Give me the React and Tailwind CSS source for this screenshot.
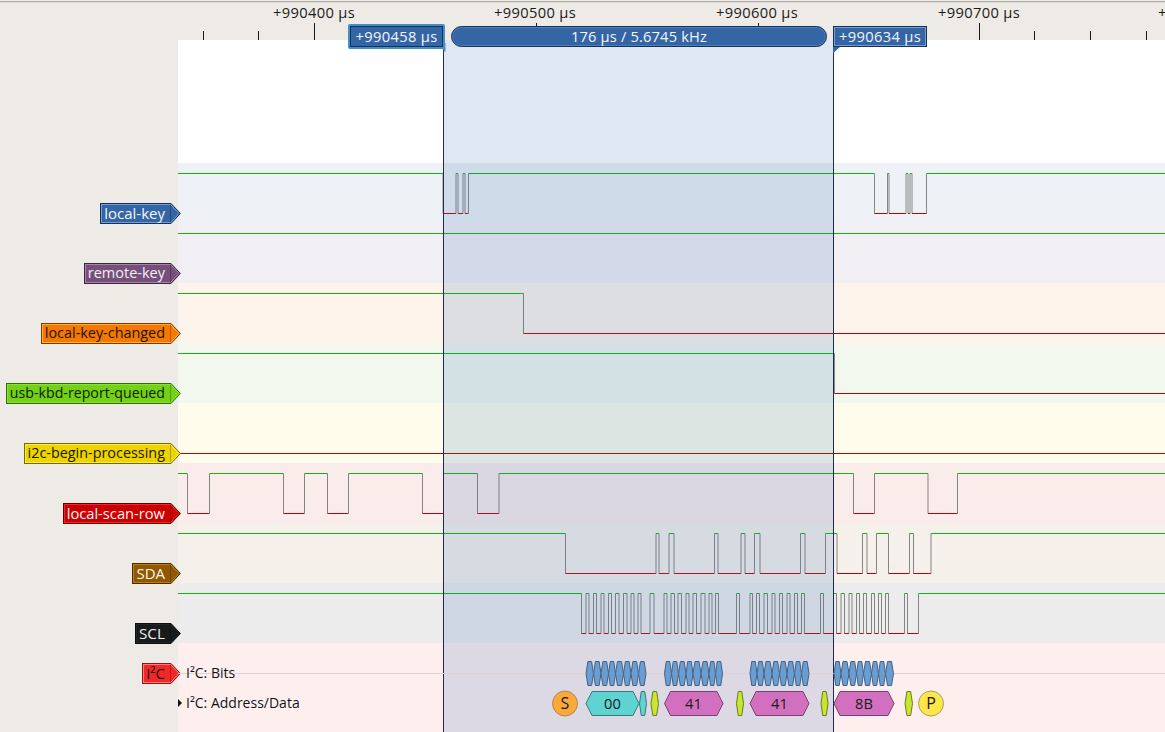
const FONT = "font-['Open_Sans',sans-serif]";
const MICRO = "µ";

function Wave({ edges = [], startHigh = true }) {
  const H = 10.5, L = 50.5;
  const pts = [178, ...edges, 1165];
  const lines = [];
  let high = startHigh;
  for (let i = 0; i < pts.length - 1; i++) {
    const y = high ? H : L;
    lines.push(<line key={"s" + i} x1={pts[i]} x2={pts[i + 1]} y1={y} y2={y} stroke={high ? "#0cb80c" : "#c00000"} />);
    if (i < edges.length) {
      lines.push(<line key={"e" + i} x1={edges[i]} x2={edges[i]} y1={H} y2={L} stroke="#848484" />);
    }
    high = !high;
  }
  return (
    <svg width="987" height="60" viewBox="178 0 987 60" className="block">
      {lines}
    </svg>
  );
}

function Arrow({ dark, light, fill }) {
  return (
    <svg width="11" height="21" viewBox="0 0 11 21" className="block shrink-0">
      <path d="M0 .5H1L10.4 10.5 1 20.5H0Z" fill={fill} stroke={dark} />
      <path d="M0 1.5H.6L9 10.5 .6 19.5H0" fill="none" stroke={light} />
    </svg>
  );
}

const signals = [
  { name: "local-key", size: "text-[15px]", band: "bg-[#eef1f6]", box: "bg-[#3465a4] border-[#17305a] shadow-[inset_1px_1px_0_#729fcf,inset_0_-1px_0_#729fcf] text-[#f4f6fa]", fill: "#3465a4", dark: "#17305a", light: "#729fcf",
    edges: [443, 456, 458, 463, 465, 468.5, 874.5, 887.5, 889, 906, 908, 910, 912, 926.5] },
  { name: "remote-key", size: "text-[14.5px]", band: "bg-[#f2eff4]", box: "bg-[#75507b] border-[#3a283d] shadow-[inset_1px_1px_0_#ad7fa8,inset_0_-1px_0_#ad7fa8] text-[#f4eef5]", fill: "#75507b", dark: "#3a283d", light: "#ad7fa8", edges: [] },
  { name: "local-key-changed", size: "text-[14.4px]", band: "bg-[#fef4ec]", box: "bg-[#f57900] border-[#7a3c00] shadow-[inset_1px_1px_0_#fcaf3e,inset_0_-1px_0_#fcaf3e] text-[#1a1200]", fill: "#f57900", dark: "#7a3c00", light: "#fcaf3e", edges: [523.5] },
  { name: "usb-kbd-report-queued", size: "text-[14.2px]", band: "bg-[#f3f8ee]", box: "bg-[#73d216] border-[#39690b] shadow-[inset_1px_1px_0_#8ae234,inset_0_-1px_0_#8ae234] text-[#0e1a02]", fill: "#73d216", dark: "#39690b", light: "#8ae234", edges: [834.5] },
  { name: "i2c-begin-processing", size: "text-[14.4px]", band: "bg-[#fefdec]", box: "bg-[#edd400] border-[#766a00] shadow-[inset_1px_1px_0_#fce94f,inset_0_-1px_0_#fce94f] text-[#1a1700]", fill: "#edd400", dark: "#766a00", light: "#fce94f", edges: [], startHigh: false },
  { name: "local-scan-row", size: "text-[14.7px]", band: "bg-[#fbecec]", box: "bg-[#cc0000] border-[#660000] shadow-[inset_1px_1px_0_#ef2929,inset_0_-1px_0_#ef2929] text-[#fff4f4]", fill: "#cc0000", dark: "#660000", light: "#ef2929",
    edges: [187.5, 209.5, 283.5, 304.5, 327.5, 348.5, 422.5, 443.5, 477.5, 499, 853.5, 874.5, 928, 957.5] },
  { name: "SDA", size: "text-[15px]", band: "bg-[#f5f1ea]", box: "bg-[#8f5902] border-[#472c01] shadow-[inset_1px_1px_0_#c17d11,inset_0_-1px_0_#c17d11] text-[#fdf6ea]", fill: "#8f5902", dark: "#472c01", light: "#c17d11",
    edges: [565.5, 656, 659, 669, 674, 714.5, 718, 741, 745, 754.5, 760, 800.5, 805, 825.5, 837, 862.5, 867, 876.5, 888.5, 909.5, 913.5, 931] },
  { name: "SCL", size: "text-[15.3px]", band: "bg-[#ececec]", box: "bg-[#181b1c] border-[#0c0e0e] shadow-[inset_1px_1px_0_#222526,inset_0_-1px_0_#222526] text-[#eeeeee]", fill: "#181b1c", dark: "#0c0e0e", light: "#222526",
    edges: [581.5, 586, 589, 593.5, 596.5, 601, 604, 608.5, 611.5, 615.5, 619, 623.5, 627, 631, 634, 638, 641, 650, 654, 664, 667, 671, 674.5, 678, 681.5, 686, 689, 693, 696.5, 701, 705, 709, 712, 715.5, 718.5, 736.5, 739.5, 750, 752.5, 756.5, 759.5, 764, 767.5, 772, 775, 779.5, 782.5, 787, 790, 794.5, 797.5, 801.5, 804.5, 820.5, 823.5, 833.5, 836.5, 841, 844.5, 849, 852, 856.5, 859.5, 863.5, 866.5, 871.5, 874.5, 878.5, 881.5, 885.5, 888.5, 904.5, 907.5, 918.5] },
];

function Label({ s, name }) {
  return (
    <div className="relative z-[5] flex h-[21px] -mr-[3px]">
      <div className={"flex items-center border-y border-l pl-[3px] pr-[5px] leading-none " + s.size + " " + s.box}>{name}</div>
      <Arrow dark={s.dark} light={s.light} fill={s.fill} />
    </div>
  );
}

function Row({ s }) {
  return (
    <div className="flex h-[60px]">
      <div className="flex w-[178px] justify-end pt-[40px]">
        <Label s={s} name={s.name} />
      </div>
      <div className={"flex-1 overflow-hidden " + s.band}>
        <Wave edges={s.edges} startHigh={s.startHigh !== false} />
      </div>
    </div>
  );
}

function hex(x0, x1, top, bottom) {
  const h = bottom - top;
  const d = Math.min(h / 4, (x1 - x0) / 4);
  const m = (top + bottom) / 2;
  return `M${x0} ${m}L${x0 + d} ${top}H${x1 - d}L${x1} ${m}L${x1 - d} ${bottom}H${x0 + d}Z`;
}

const bitGroups = [
  [586, 593.5, 601, 608.5, 615.5, 623.5, 631, 638.5, 646],
  [664.5, 671.5, 678.5, 686, 693, 701, 709, 715.5, 722.5],
  [750, 757, 764, 772, 779.5, 787, 794.5, 801.5, 809],
  [834, 841, 849, 856.5, 863.5, 871.5, 878.5, 885.5, 893.5],
];

function Decoder() {
  const T = 18.5, B = 42.5;
  const A1 = 48.5, A2 = 72.5, AM = 60.5;
  const pieces = [];
  bitGroups.forEach((g, gi) => {
    for (let i = 0; i < g.length - 1; i++) {
      pieces.push(<path key={`b${gi}-${i}`} d={hex(g[i], g[i + 1], T, B)} fill="#6c9dd0" stroke="#3f6289" />);
    }
  });
  const big = [
    [586, 639, "00", "#5fd2d2", "#39797c", 612.5],
    [664.5, 723, "41", "#d270bf", "#7a4272", 693.5],
    [750, 809, "41", "#d270bf", "#7a4272", 779.5],
    [834, 894, "8B", "#d270bf", "#7a4272", 864],
  ];
  const small = [
    [639.5, 646.5, "#5fd2d2", "#39797c"],
    [651, 658.5, "#c9e62e", "#6d7a24"],
    [736.5, 743.5, "#c9e62e", "#6d7a24"],
    [821, 828, "#c9e62e", "#6d7a24"],
    [905, 912.5, "#c9e62e", "#6d7a24"],
  ];
  const ff = "'Open Sans',sans-serif";
  return (
    <svg width="987" height="89" viewBox="178 0 987 89" className="block">
      <line x1="178" x2="1165" y1="30.5" y2="30.5" stroke="#e0d2d4" />
      {pieces}
      {small.map(([a, b, f, st], i) => <path key={"sm" + i} d={hex(a, b, A1, A2)} fill={f} stroke={st} />)}
      {big.map(([a, b, t, f, st, cx], i) => (
        <g key={"bg" + i}>
          <path d={hex(a, b, A1, A2)} fill={f} stroke={st} />
          <text x={cx} y={AM + 5} textAnchor="middle" fontSize="14.7" fill="#1a1a1a" fontFamily={ff}>{t}</text>
        </g>
      ))}
      <circle cx="565" cy={AM} r="12.5" fill="#fba83a" stroke="#a98a60" />
      <text x="565" y={AM + 5.5} textAnchor="middle" fontSize="16" fill="#1a1a1a" fontFamily={ff}>S</text>
      <circle cx="931" cy={AM} r="12.5" fill="#fce64a" stroke="#a9a060" />
      <text x="931" y={AM + 5.5} textAnchor="middle" fontSize="16" fill="#1a1a1a" fontFamily={ff}>P</text>
    </svg>
  );
}

const tickX = [203.5, 258.5, 369.5, 425.5, 480.5, 591.5, 647.5, 702.5, 813.5, 869.5, 925.5, 1034.5, 1090.5, 1146.5];
const majorX = [314.5, 536.5, 758.5, 979.5];

function Ruler() {
  return (
    <div className="relative h-[38px] overflow-hidden">
      <svg width="1165" height="38" viewBox="0 2 1165 38" className="absolute left-0 top-0">
        {tickX.map((x) => <line key={x} x1={x} x2={x} y1="31" y2="40" stroke="#1a1a1a" />)}
        {majorX.map((x) => <line key={x} x1={x} x2={x} y1="23" y2="40" stroke="#1a1a1a" />)}
      </svg>
      {[["+990400", 314], ["+990500", 535], ["+990600", 757], ["+990700", 979], ["+990800", 1199]].map(([t, x]) => (
        <span key={t} className="absolute top-0 -translate-x-1/2 whitespace-nowrap text-[14.7px] leading-[21px] tracking-[0.35px] text-[#1b1b1b]" style={{ left: x }}>
          {t} {MICRO}s
        </span>
      ))}
    </div>
  );
}

export default function App() {
  const i2c = { size: "text-[15px]", box: "bg-[#ef2929] border-[#8a1616] shadow-[inset_1px_1px_0_#ff7a7a,inset_0_-1px_0_#ff7a7a] text-[#2a0505]", fill: "#ef2929", dark: "#8a1616", light: "#ff7a7a" };
  return (
    <div className={"relative h-[732px] w-[1165px] overflow-hidden bg-[#eeebe7] " + FONT}>
      <div className="mt-px h-[2px] border-t border-[#b3b0ab] bg-[#dcd9d5] -mb-px" />
      <Ruler />
      <div className="flex h-[123px]">
        <div className="w-[178px]" />
        <div className="flex-1 bg-white" />
      </div>
      {signals.map((s) => <Row key={s.name} s={s} />)}
      <div className="flex h-[89px]">
        <div className="flex w-[178px] justify-end pt-[20px]">
          <Label s={i2c} name="I²C" />
        </div>
        <div className="flex-1 bg-[#feeeee]">
          <div className="relative z-20">
            <Decoder />
            <div className="absolute left-[8px] top-[20px] flex h-[20px] items-center text-[14px] leading-none text-[#111] [text-shadow:0_0_2px_#fff]">I²C: Bits</div>
            <div className="absolute left-0 top-[50px] flex h-[20px] items-center text-[14px] leading-none text-[#111] [text-shadow:0_0_2px_#fff]">
              <svg width="8" height="10" viewBox="0 0 8 10" className="block"><path d="M0 1L4 5 0 9Z" fill="#111" /></svg>
              I²C: Address/Data
            </div>
          </div>
        </div>
      </div>

      {/* selection and cursors */}
      <div className="absolute bottom-0 left-[444px] top-[40px] z-10 w-[389px] bg-[#3a6eb0]/[0.17]" />
      <div className="absolute bottom-0 left-[443px] top-[50px] z-10 w-px bg-[#1c2d50]" />
      <div className="absolute bottom-0 left-[833px] top-[50px] z-10 w-px bg-[#1c2d50]" />

      {/* range pill */}
      <div className="absolute left-[451px] top-[26px] z-30 flex h-[21px] w-[376px] items-center justify-center rounded-full border border-[#17305a] bg-[#3465a4] text-[14.7px] leading-none tracking-[0.15px] text-[#f4f6fa] shadow-[inset_0_0_0_1px_#4f7fb8]">
        176 {MICRO}s / 5.6745 kHz
      </div>

      {/* start flag */}
      <svg width="10" height="10" viewBox="0 0 10 10" className="absolute left-[436px] top-[43px] z-30 block">
        <path d="M0 0H9.5V9L5 5Z" fill="#3f8fc9" />
      </svg>
      <div className="absolute left-[348px] top-[24px] z-30 flex h-[25px] w-[97px] items-center justify-center rounded-[2px] border-2 border-[#3f8fc9] bg-[#3465a4] text-[14.7px] leading-none tracking-[0.35px] text-[#f4f6fa] shadow-[inset_0_0_0_1px_#17305a]">
        +990458 {MICRO}s
      </div>

      {/* end flag */}
      <svg width="8" height="7" viewBox="0 0 8 7" className="absolute left-[833px] top-[46px] z-30 block">
        <path d="M0 0H8L1.5 6 0 7Z" fill="#3465a4" />
      </svg>
      <div className="absolute left-[833px] top-[26px] z-30 flex h-[21px] w-[94px] items-center justify-center border border-[#17305a] bg-[#3465a4] text-[14.7px] leading-none tracking-[0.35px] text-[#f4f6fa] shadow-[inset_0_0_0_1px_#729fcf]">
        +990634 {MICRO}s
      </div>
    </div>
  );
}
